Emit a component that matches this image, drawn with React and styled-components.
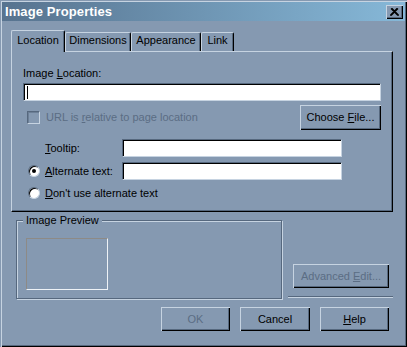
import styled, { createGlobalStyle } from "styled-components";

const BG = "#8599b1";
const LIGHT = "#c6d3e1";
const SHADOW = "#56687e";
const DISABLED = "#5b6d84";

const Global = createGlobalStyle`
  html, body {
    margin: 0;
    padding: 0;
    background: ${BG};
  }
  body {
    font-family: "Liberation Sans", Arial, sans-serif;
    font-size: 11px;
    color: #000;
  }
  u {
    text-decoration-thickness: 1px;
    text-underline-offset: 1px;
  }
`;

const Window = styled.div`
  width: 407px;
  height: 347px;
  box-sizing: border-box;
  padding: 2px;
  background: ${BG};
  box-shadow: inset 1px 1px 0 ${BG}, inset 2px 2px 0 ${LIGHT},
    inset -1px -1px 0 #000, inset -2px -2px 0 ${SHADOW};
  display: flex;
  flex-direction: column;
`;

const TitleBar = styled.div`
  height: 19px;
  display: flex;
  align-items: center;
  padding-left: 3px;
  background: linear-gradient(to right, #57738f, #86b8d8);
  color: #fff;
  font-weight: bold;
  font-size: 13px;
  letter-spacing: 0.1px;
`;

const CloseButton = styled.div`
  margin-left: auto;
  margin-right: 2px;
  align-self: flex-start;
  margin-top: 3px;
  width: 17px;
  height: 14px;
  box-sizing: border-box;
  background: ${BG};
  box-shadow: inset 1px 1px 0 ${LIGHT}, inset -1px -1px 0 #000,
    inset -2px -2px 0 ${SHADOW};
  display: flex;
  align-items: center;
  justify-content: center;
`;

const Body = styled.div`
  padding: 9px 12px 0 9px;
  display: flex;
  flex-direction: column;
`;

const TabRow = styled.div`
  display: flex;
  align-items: flex-end;
  height: 21px;
`;

const Tab = styled.div`
  position: relative;
  z-index: ${(p) => (p.$active ? 2 : 1)};
  width: ${(p) => p.$w}px;
  height: ${(p) => (p.$active ? 22 : 19)}px;
  margin-bottom: ${(p) => (p.$active ? -1 : 0)}px;
  box-sizing: border-box;
  background: ${BG};
  border-top: 1px solid ${LIGHT};
  border-left: 1px solid ${LIGHT};
  border-right: 1px solid #000;
  border-radius: 2px 2px 0 0;
  box-shadow: inset -1px 0 0 ${SHADOW};
  text-align: center;
  line-height: 13px;
  padding-top: ${(p) => (p.$active ? 3 : 1)}px;
`;

const Panel = styled.div`
  width: 382px;
  height: 161px;
  box-sizing: border-box;
  border-top: 1px solid ${LIGHT};
  border-left: 1px solid ${LIGHT};
  border-right: 1px solid #000;
  border-bottom: 1px solid #000;
  box-shadow: inset -1px -1px 0 ${SHADOW};
  padding: 15px 11px 0 11px;
  display: flex;
  flex-direction: column;
`;

const Label = styled.div`
  line-height: 13px;
  height: 13px;
  color: ${(p) => (p.$disabled ? DISABLED : "#000")};
`;

const TextBox = styled.div`
  width: ${(p) => p.$w}px;
  height: 18px;
  box-sizing: border-box;
  background: #fff;
  border: 1px solid;
  border-color: ${SHADOW} ${LIGHT} ${LIGHT} ${SHADOW};
  box-shadow: inset 1px 1px 0 #000;
  margin-top: ${(p) => p.$mt || 0}px;
  display: flex;
  align-items: center;
  padding-left: 3px;
`;

const Caret = styled.span`
  width: 1px;
  height: 13px;
  background: #000;
`;

const Row = styled.div`
  display: flex;
  align-items: center;
  margin-top: ${(p) => p.$mt}px;
  height: ${(p) => p.$h}px;
`;

const CheckBox = styled.span`
  width: 13px;
  height: 13px;
  box-sizing: border-box;
  margin-left: 4px;
  margin-right: 6px;
  border: 1px solid;
  border-color: ${SHADOW} ${LIGHT} ${LIGHT} ${SHADOW};
  box-shadow: inset 1px 1px 0 #6c7f96;
`;

const Radio = styled.span`
  width: 12px;
  height: 12px;
  box-sizing: border-box;
  margin-left: 5px;
  margin-right: 5px;
  border-radius: 50%;
  background: #fff;
  border: 1px solid;
  border-color: ${SHADOW} ${LIGHT} ${LIGHT} ${SHADOW};
  box-shadow: inset 1px 1px 0 #000;
  display: flex;
  align-items: center;
  justify-content: center;
  &::after {
    content: "";
    display: ${(p) => (p.$checked ? "block" : "none")};
    width: 4px;
    height: 4px;
    border-radius: 50%;
    background: #000;
  }
`;

const FieldLabel = styled.div`
  width: ${(p) => p.$w}px;
  padding-left: ${(p) => p.$pl || 0}px;
  box-sizing: border-box;
  line-height: 13px;
`;

const Button = styled.div`
  width: ${(p) => p.$w}px;
  height: ${(p) => p.$h || 24}px;
  box-sizing: border-box;
  margin-left: ${(p) => p.$ml || 0}px;
  background: ${BG};
  box-shadow: inset 1px 1px 0 ${LIGHT}, inset -1px -1px 0 #000,
    inset -2px -2px 0 ${SHADOW};
  display: flex;
  align-items: center;
  justify-content: center;
  color: ${(p) => (p.$disabled ? DISABLED : "#000")};
  padding-bottom: 1px;
`;

const Lower = styled.div`
  display: flex;
  margin-top: 8px;
  height: 79px;
`;

const GroupBox = styled.div`
  position: relative;
  margin-left: 5px;
  width: 266px;
  height: 79px;
  box-sizing: border-box;
  border: 1px solid ${SHADOW};
  box-shadow: inset 1px 1px 0 ${LIGHT}, 1px 1px 0 ${LIGHT};
  padding: 17px 0 0 9px;
`;

const Legend = styled.span`
  position: absolute;
  top: -7px;
  left: 6px;
  padding: 0 3px;
  background: ${BG};
  line-height: 13px;
`;

const Preview = styled.div`
  width: 82px;
  height: 52px;
  box-sizing: border-box;
  border: 1px solid;
  border-color: #8d8a86 #eef2f6 #eef2f6 #8d8a86;
`;

const SideColumn = styled.div`
  margin-left: 6px;
  width: 105px;
  display: flex;
  flex-direction: column;
  justify-content: flex-end;
`;

const Separator = styled.div`
  margin-top: 8px;
  margin-bottom: 1px;
  height: 0;
  border-top: 1px solid ${SHADOW};
  border-bottom: 1px solid ${LIGHT};
`;

const ButtonRow = styled.div`
  display: flex;
  justify-content: flex-end;
  gap: 10px;
  margin-top: 8px;
  padding-right: 4px;
`;

export default function App() {
  return (
    <>
      <Global />
      <Window>
        <TitleBar>
          Image Properties
          <CloseButton>
            <svg width="9" height="8" viewBox="0 0 9 8">
              <path d="M1 0.5 L8 7.5 M8 0.5 L1 7.5 M2 0.5 L9 7.5 M7 0.5 L0 7.5" stroke="#000" strokeWidth="1.2" fill="none" />
            </svg>
          </CloseButton>
        </TitleBar>
        <Body>
          <TabRow>
            <Tab $active $w={54}>Location</Tab>
            <Tab $w={66}>Dimensions</Tab>
            <Tab $w={70}>Appearance</Tab>
            <Tab $w={33}>Link</Tab>
          </TabRow>
          <Panel>
            <Label>
              Image <u>L</u>ocation:
            </Label>
            <TextBox $w={358} $mt={3}>
              <Caret />
            </TextBox>
            <Row $mt={4} $h={25}>
              <CheckBox />
              <Label $disabled>
                URL is <u>r</u>elative to page location
              </Label>
              <Button $w={81} $h={25} style={{ marginLeft: "auto" }}>
                <span>
                  Choose <u>F</u>ile...
                </span>
              </Button>
            </Row>
            <Row $mt={9} $h={18}>
              <FieldLabel $w={99} $pl={22}>
                <u>T</u>ooltip:
              </FieldLabel>
              <TextBox $w={220} />
            </Row>
            <Row $mt={5} $h={18}>
              <Radio $checked />
              <FieldLabel $w={77}>
                <u>A</u>lternate text:
              </FieldLabel>
              <TextBox $w={220} />
            </Row>
            <Row $mt={6} $h={14}>
              <Radio />
              <FieldLabel $w={200}>
                <u>D</u>on't use alternate text
              </FieldLabel>
            </Row>
          </Panel>
          <Lower>
            <GroupBox>
              <Legend>Image Preview</Legend>
              <Preview />
            </GroupBox>
            <SideColumn>
              <Button $w={96} $ml={5} $disabled>
                <span>
                  Advanced <u>E</u>dit...
                </span>
              </Button>
              <Separator />
            </SideColumn>
          </Lower>
          <ButtonRow>
            <Button $w={69} $disabled>OK</Button>
            <Button $w={70}>Cancel</Button>
            <Button $w={69}>
              <span>
                <u>H</u>elp
              </span>
            </Button>
          </ButtonRow>
        </Body>
      </Window>
    </>
  );
}
